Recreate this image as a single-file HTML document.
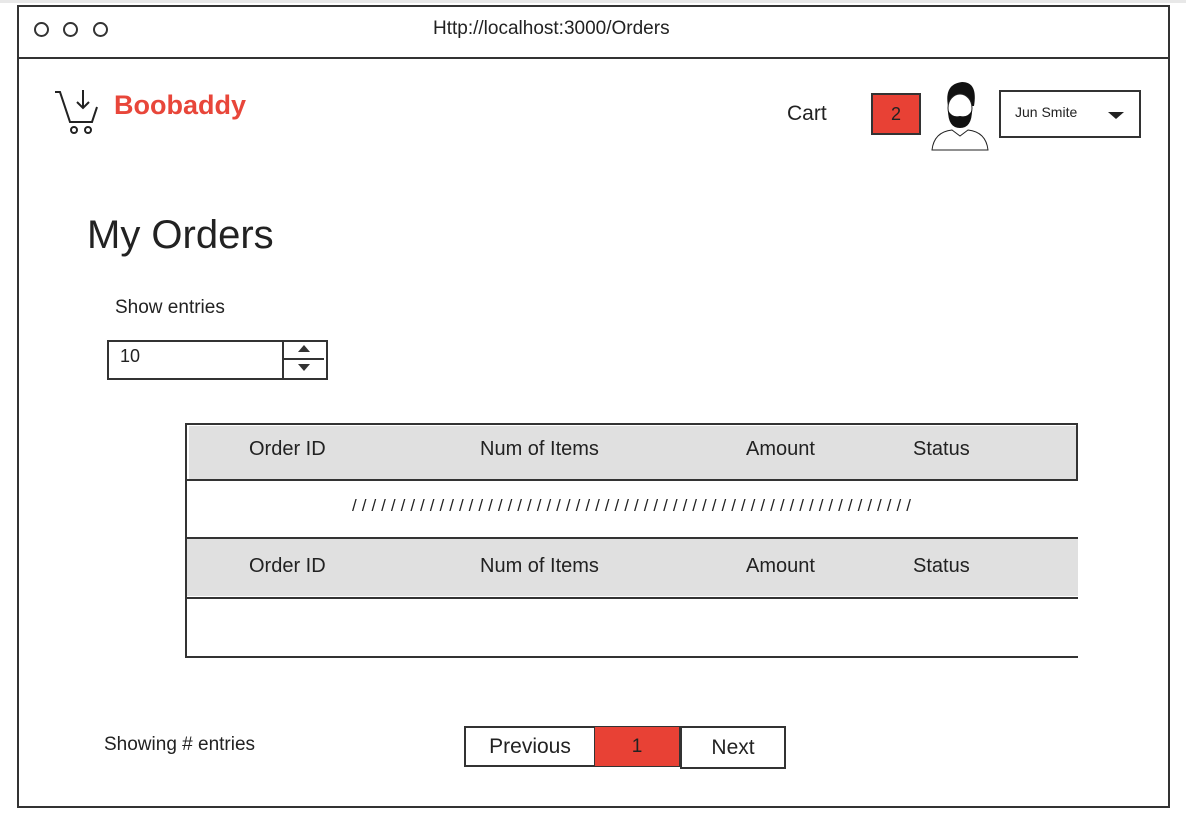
<!DOCTYPE html>
<html><head><style>
body{margin:0;width:1186px;height:823px;background:#fff;position:relative;overflow:hidden;font-family:"Liberation Sans",sans-serif;color:#222}
.a{position:absolute}
.t{position:absolute;white-space:nowrap}
</style></head><body>
<div class="a" style="left:0;top:0;width:1186px;height:3px;background:#e8e8e8"></div>
<div class="a" style="left:17px;top:5px;width:1149px;height:799px;border:2px solid #333"></div>
<div class="a" style="left:17px;top:57px;width:1151px;height:2px;background:#333"></div>
<div class="a" style="left:34px;top:22px;width:11px;height:11px;border:2px solid #333;border-radius:50%"></div>
<div class="a" style="left:63px;top:22px;width:11px;height:11px;border:2px solid #333;border-radius:50%"></div>
<div class="a" style="left:93px;top:22px;width:11px;height:11px;border:2px solid #333;border-radius:50%"></div>
<div class="t" style="left:433px;top:18px;font-size:19px">Http://localhost:3000/Orders</div>
<svg class="a" style="left:52px;top:86px" width="50" height="50" viewBox="0 0 50 50" fill="none" stroke="#222" stroke-width="2"><path d="M3 6h5l10 30h22l5-15"/><path d="M31 4v18M25 16l6 6 6-6"/><circle cx="22" cy="44" r="3"/><circle cx="36" cy="44" r="3"/></svg>
<div class="t" style="left:114px;top:90px;font-size:27px;color:#e8463a;font-weight:bold">Boobaddy</div>
<div class="t" style="left:787px;top:102px;font-size:21px">Cart</div>
<div class="a" style="left:871px;top:93px;width:46px;height:38px;background:#e84135;border:2px solid #333;text-align:center;line-height:38px;font-size:18px">2</div>
<svg class="a" style="left:928px;top:76px" width="64" height="76" viewBox="0 0 64 76"><path d="M20 30q-4-22 14-24q16 0 12 24z" fill="#111"/><ellipse cx="32" cy="32" rx="12" ry="14" fill="#fff" stroke="#222"/><path d="M20 34q0 18 12 18q12 0 12-18q-4 8-12 6q-8 2-12-6z" fill="#111"/><path d="M4 74q2-18 20-20l8 6 8-6q18 2 20 20z" fill="#fff" stroke="#222"/></svg>
<div class="a" style="left:999px;top:90px;width:138px;height:44px;border:2px solid #333"></div>
<div class="t" style="left:1015px;top:104px;font-size:14px">Jun Smite</div>
<div class="a" style="left:1108px;top:112px;border-left:8px solid transparent;border-right:8px solid transparent;border-top:7px solid #222"></div>
<div class="t" style="left:87px;top:213px;font-size:40px">My Orders</div>
<div class="t" style="left:115px;top:297px;font-size:19px">Show entries</div>
<div class="a" style="left:107px;top:340px;width:217px;height:36px;border:2px solid #333"></div>
<div class="a" style="left:282px;top:340px;width:2px;height:38px;background:#333"></div>
<div class="a" style="left:284px;top:358px;width:40px;height:2px;background:#333"></div>
<div class="a" style="left:298px;top:345px;border-left:6px solid transparent;border-right:6px solid transparent;border-bottom:7px solid #333"></div>
<div class="a" style="left:298px;top:364px;border-left:6px solid transparent;border-right:6px solid transparent;border-top:7px solid #333"></div>
<div class="t" style="left:120px;top:346px;font-size:18px">10</div>
<div class="a" style="left:185px;top:423px;width:891px;height:231px;border:2px solid #333;border-right:0"></div>
<div class="a" style="left:1076px;top:423px;width:2px;height:58px;background:#333"></div>
<div class="a" style="left:189px;top:426px;width:887px;height:53px;background:#e0e0e0"></div>
<div class="a" style="left:187px;top:479px;width:891px;height:2px;background:#333"></div>
<div class="a" style="left:187px;top:538px;width:891px;height:58px;background:#e0e0e0"></div>
<div class="a" style="left:187px;top:537px;width:891px;height:2px;background:#333"></div>
<div class="a" style="left:187px;top:597px;width:891px;height:2px;background:#333"></div>
<div class="t" style="left:249px;top:438px;font-size:20px">Order ID</div>
<div class="t" style="left:480px;top:438px;font-size:20px">Num of Items</div>
<div class="t" style="left:746px;top:438px;font-size:20px">Amount</div>
<div class="t" style="left:913px;top:438px;font-size:20px">Status</div>
<div class="t" style="left:352px;top:496px;font-size:17px;letter-spacing:5px">//////////////////////////////////////////////////////////</div>
<div class="t" style="left:249px;top:555px;font-size:20px">Order ID</div>
<div class="t" style="left:480px;top:555px;font-size:20px">Num of Items</div>
<div class="t" style="left:746px;top:555px;font-size:20px">Amount</div>
<div class="t" style="left:913px;top:555px;font-size:20px">Status</div>
<div class="t" style="left:104px;top:734px;font-size:19px">Showing # entries</div>
<div class="a" style="left:464px;top:726px;width:128px;height:37px;border:2px solid #333;font-size:21px;text-align:center;line-height:37px">Previous</div>
<div class="a" style="left:594px;top:726px;width:84px;height:39px;background:#e84135;border:1px solid #333;font-size:19px;text-align:center;line-height:39px">1</div>
<div class="a" style="left:680px;top:726px;width:102px;height:39px;border:2px solid #333;font-size:21px;text-align:center;line-height:39px">Next</div>
</body></html>
